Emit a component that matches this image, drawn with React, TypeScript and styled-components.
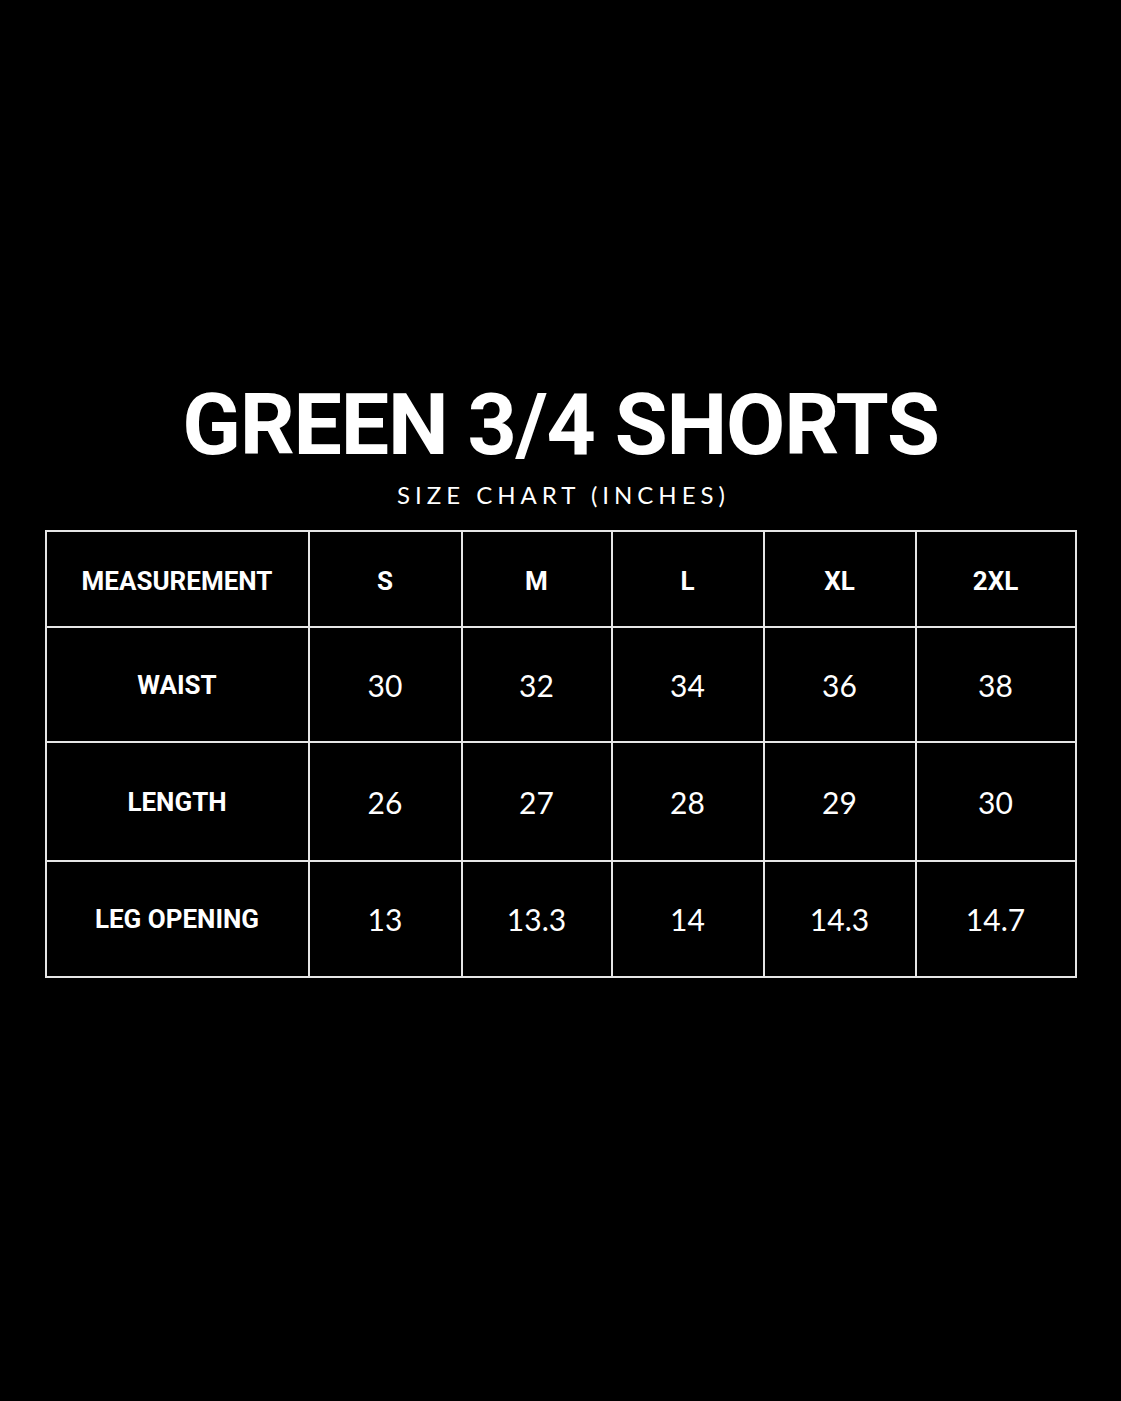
import styled, { createGlobalStyle } from "styled-components";

const GlobalStyle = createGlobalStyle`
  html, body {
    margin: 0;
    padding: 0;
    background: #000;
  }
  body {
    font-family: "Lato", "Liberation Sans", sans-serif;
    color: #fff;
  }
`;

const columns = ["MEASUREMENT", "S", "M", "L", "XL", "2XL"];
const colWidths = [263, 153, 150, 152, 152, 160];

const rows = [
  { label: "WAIST", values: ["30", "32", "34", "36", "38"], height: 115 },
  { label: "LENGTH", values: ["26", "27", "28", "29", "30"], height: 119 },
  { label: "LEG OPENING", values: ["13", "13.3", "14", "14.3", "14.7"], height: 116 },
];

const App = () => {
  return (
    <Page>
      <GlobalStyle />
      <Title>GREEN 3/4 SHORTS</Title>
      <Subtitle>SIZE CHART (INCHES)</Subtitle>
      <Chart>
        <colgroup>
          {colWidths.map((w, i) => (
            <col key={i} style={{ width: w }} />
          ))}
        </colgroup>
        <thead>
          <tr>
            {columns.map((c) => (
              <HeadCell key={c}>{c}</HeadCell>
            ))}
          </tr>
        </thead>
        <tbody>
          {rows.map((row) => (
            <Row key={row.label} $height={row.height}>
              <LabelCell>{row.label}</LabelCell>
              {row.values.map((v, i) => (
                <ValueCell key={i}>{v}</ValueCell>
              ))}
            </Row>
          ))}
        </tbody>
      </Chart>
    </Page>
  );
};

const Page = styled.div`
  width: 1121px;
  height: 1401px;
  background: #000;
  display: flex;
  flex-direction: column;
  align-items: center;
  padding-top: 377px;
  box-sizing: border-box;
`;

const Title = styled.h1`
  margin: 0;
  font-family: "Roboto", "Liberation Sans", sans-serif;
  font-weight: 700;
  font-size: 86px;
  line-height: 96px;
  letter-spacing: -1.2px;
  color: #fff;
`;

const Subtitle = styled.div`
  margin-top: 7px;
  padding-left: 6px;
  font-family: "Lato", "Liberation Sans", sans-serif;
  font-weight: 400;
  font-size: 24px;
  line-height: 30px;
  letter-spacing: 5px;
  color: #fff;
`;

const Chart = styled.table`
  margin-top: 20px;
  border-collapse: collapse;
  table-layout: fixed;
  width: 1030px;
  border: 2px solid #e6e6e6;
`;

const HeadCell = styled.th`
  height: 90px;
  padding: 4px 0 0;
  border: 2px solid #e6e6e6;
  text-align: center;
  vertical-align: middle;
  font-family: "Roboto", "Liberation Sans", sans-serif;
  font-weight: 700;
  font-size: 26px;
  color: #fff;
`;

const Row = styled.tr<{ $height: number }>`
  height: ${(p) => p.$height}px;
`;

const LabelCell = styled.td`
  padding: 0;
  border: 2px solid #e6e6e6;
  text-align: center;
  vertical-align: middle;
  font-family: "Roboto", "Liberation Sans", sans-serif;
  font-weight: 700;
  font-size: 26px;
  color: #fff;
`;

const ValueCell = styled.td`
  padding: 0;
  border: 2px solid #e6e6e6;
  text-align: center;
  vertical-align: middle;
  font-weight: 400;
  font-size: 30px;
  color: #fff;
`;

export default App;
